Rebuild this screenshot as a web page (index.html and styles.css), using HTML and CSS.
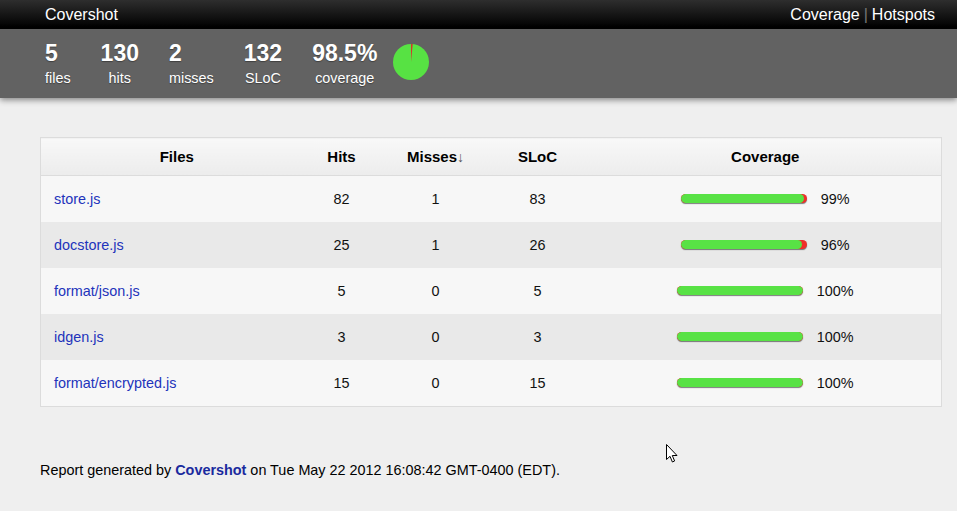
FILE: index.html
```html
<!DOCTYPE html>
<html lang="en">
<head>
<meta charset="utf-8">
<title>Covershot</title>
<link rel="stylesheet" href="styles.css">
</head>
<body>
<header class="topbar">
  <div class="brand">Covershot</div>
  <nav class="nav"><a href="#">Coverage</a><span class="sep">|</span><a href="#">Hotspots</a></nav>
</header>
<section class="stats">
  <div class="stat stat-left"><div class="num">5</div><div class="lbl">files</div></div>
  <div class="stat"><div class="num">130</div><div class="lbl">hits</div></div>
  <div class="stat stat-left"><div class="num">2</div><div class="lbl">misses</div></div>
  <div class="stat"><div class="num">132</div><div class="lbl">SLoC</div></div>
  <div class="stat"><div class="num">98.5%</div><div class="lbl">coverage</div></div>
  <svg class="pie" width="36" height="36" viewBox="0 0 36 36">
    <circle cx="18" cy="18" r="18" fill="#57e243"/>
    <path d="M18 18 L18 0 A18 18 0 0 1 19.7 0.08 Z" fill="#d8322c"/>
  </svg>
</section>
<main class="content">
  <table class="files">
    <colgroup>
      <col class="c-file"><col class="c-hits"><col class="c-miss"><col class="c-sloc"><col class="c-cov">
    </colgroup>
    <thead>
      <tr><th>Files</th><th>Hits</th><th>Misses<span class="arrow">↓</span></th><th>SLoC</th><th class="cov">Coverage</th></tr>
    </thead>
    <tbody>
      <tr><td class="file"><a href="#">store.js</a></td><td>82</td><td>1</td><td>83</td><td class="cov"><span class="bar"><span class="fill" style="width:98%"></span></span><span class="pct">99%</span></td></tr>
      <tr><td class="file"><a href="#">docstore.js</a></td><td>25</td><td>1</td><td>26</td><td class="cov"><span class="bar"><span class="fill" style="width:96%"></span></span><span class="pct">96%</span></td></tr>
      <tr><td class="file"><a href="#">format/json.js</a></td><td>5</td><td>0</td><td>5</td><td class="cov"><span class="bar"><span class="fill" style="width:100%"></span></span><span class="pct">100%</span></td></tr>
      <tr><td class="file"><a href="#">idgen.js</a></td><td>3</td><td>0</td><td>3</td><td class="cov"><span class="bar"><span class="fill" style="width:100%"></span></span><span class="pct">100%</span></td></tr>
      <tr><td class="file"><a href="#">format/encrypted.js</a></td><td>15</td><td>0</td><td>15</td><td class="cov"><span class="bar"><span class="fill" style="width:100%"></span></span><span class="pct">100%</span></td></tr>
    </tbody>
  </table>
  <footer class="foot">Report generated by <a href="#">Covershot</a> on Tue May 22 2012 16:08:42 GMT-0400 (EDT).</footer>
</main>
<svg class="cursor" width="12" height="19" viewBox="0 0 12 19">
  <path d="M0.5 0.5 L0.5 15.5 L4 12.3 L6.4 18 L8.6 17 L6.3 11.5 L11 11.5 Z" fill="#fff" stroke="#000" stroke-width="1" stroke-linejoin="round"/>
</svg>
</body>
</html>
```

FILE: styles.css
```css
html, body {
  margin: 0;
  padding: 0;
}
body {
  background: #efefef;
  font-family: "Liberation Sans", Arial, sans-serif;
  color: #111;
  position: relative;
  min-height: 511px;
}
a {
  text-decoration: none;
}
.topbar {
  height: 29px;
  line-height: 29px;
  display: flex;
  justify-content: space-between;
  padding: 0 22px 0 45px;
  background: linear-gradient(#2e2e2e, #000 95%);
  color: #fff;
  font-size: 16px;
}
.nav a {
  color: #fff;
}
.sep {
  color: #777;
  margin: 0 4px;
}
.stats {
  height: 59px;
  padding: 10px 45px 0;
  background: #626262;
  display: flex;
  gap: 30px;
  align-items: flex-start;
  box-shadow: 0 2px 6px rgba(0, 0, 0, 0.45);
  color: #fff;
  text-shadow: 0 1px 1px rgba(0, 0, 0, 0.35);
  position: relative;
}
.stat {
  display: flex;
  flex-direction: column;
  align-items: center;
}
.stat-left {
  align-items: flex-start;
}
.num {
  font-size: 23px;
  font-weight: bold;
  line-height: 28px;
}
.lbl {
  font-size: 14.4px;
  line-height: 17px;
  margin-top: 3px;
}
.pie {
  margin-left: -14px;
  margin-top: 5px;
}
.content {
  padding: 39px 16px 0 40px;
}
.files {
  width: 100%;
  border-collapse: collapse;
  table-layout: fixed;
  border: 1px solid #dcdcdc;
  font-size: 14.4px;
}
.c-file { width: 272px; }
.c-hits { width: 58px; }
.c-miss { width: 130px; }
.c-sloc { width: 74px; }
.c-cov { width: 367px; }
thead th {
  height: 37px;
  padding: 0;
  font-size: 15px;
  font-weight: bold;
  color: #000;
  text-align: center;
  background: linear-gradient(#f8f8f8, #ececec);
  border-bottom: 1px solid #dcdcdc;
}
.arrow {
  font-size: 14px;
  font-weight: normal;
  color: #555;
}
tbody td {
  height: 46px;
  padding: 0;
  text-align: center;
  color: #111;
}
tbody tr:nth-child(odd) td {
  background: #f7f7f7;
}
tbody tr:nth-child(even) td {
  background: #e9e9e9;
}
td.file {
  text-align: left;
  padding-left: 13px;
}
td.file a {
  color: #2233bb;
}
th.cov, td.cov {
  padding-left: 15px;
}
.bar {
  display: inline-block;
  vertical-align: middle;
  width: 126px;
  height: 9px;
  border-radius: 5px;
  background: #ee2f2a;
  box-shadow: 0 1px 1px rgba(0, 0, 0, 0.5);
  margin-right: 14px;
  position: relative;
  overflow: hidden;
  text-align: left;
  margin-top: -2px;
}
.fill {
  display: block;
  height: 100%;
  border-radius: 5px;
  background: #58e245;
}
.pct {
  vertical-align: middle;
}
.foot {
  margin-top: 55px;
  font-size: 14.4px;
  line-height: 17px;
  color: #000;
}
.foot a {
  color: #1a2a9e;
  font-weight: bold;
}
.cursor {
  position: absolute;
  left: 666px;
  top: 444px;
}
```
